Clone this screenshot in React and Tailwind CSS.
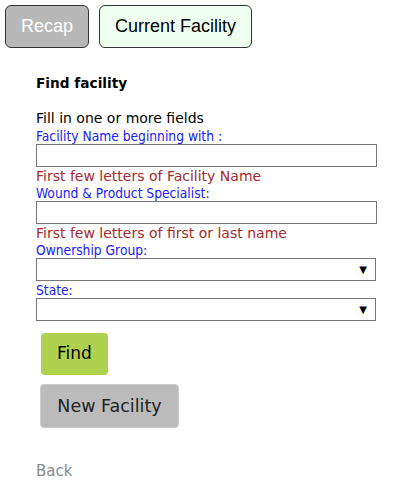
export default function App() {
  const label = "block text-[13.7px] leading-[16px] text-[#2020ff] font-['DejaVu_Sans_Condensed','DejaVu_Sans',sans-serif]";
  const hint = "block text-[14px] leading-[18px] text-[#a52a2a] font-['DejaVu_Sans',sans-serif]";
  const box = "block w-[341px] h-[23px] border border-[#767676] bg-white";
  const select = "flex w-[340px] h-[23px] border border-[#767676] bg-white items-center justify-end pr-[8px]";
  return (
    <div className="w-[404px] h-[494px] bg-white">
      <div className="flex gap-[10px] pt-[5px] pl-[5px] font-['Liberation_Sans',Arial,sans-serif] text-[18px]">
        <button className="w-[84px] h-[43px] rounded-[6px] border border-[#333] bg-[#b8b8b8] text-white">
          Recap
        </button>
        <button className="w-[153px] h-[43px] rounded-[6px] border border-[#333] bg-[#efffef] text-black">
          Current Facility
        </button>
      </div>

      <div className="pl-[36px] pt-[25px] font-['DejaVu_Sans',sans-serif] text-black">
        <div className="text-[13.7px] leading-[20px] font-bold">Find facility</div>
        <div className="mt-[16px] text-[14px] leading-[19px]">Fill in one or more fields</div>
        <span className={label}>Facility Name beginning with :</span>
        <input type="text" className={box} />
        <span className={hint}>First few letters of Facility Name</span>
        <span className={label}>Wound &amp; Product Specialist:</span>
        <input type="text" className={box} />
        <span className={hint}>First few letters of first or last name</span>
        <span className={label}>Ownership Group:</span>
        <div className={select}>
          <span className="text-[10px] leading-none text-black">▼</span>
        </div>
        <span className={label + " mt-[1px]"}>State:</span>
        <div className={select}>
          <span className="text-[10px] leading-none text-black">▼</span>
        </div>

        <button className="mt-[12px] ml-[5px] block w-[67px] h-[42px] rounded-[4px] bg-[#b0d14e] text-[17px] text-black">
          Find
        </button>
        <button className="mt-[9px] ml-[4px] block w-[139px] h-[44px] rounded-[4px] border border-[#ccc] bg-[#bbbbbb] text-[17.5px] text-[#222]">
          New Facility
        </button>

        <div className="mt-[32px] text-[15px] leading-[22px] text-[#888]">Back</div>
      </div>
    </div>
  );
}
